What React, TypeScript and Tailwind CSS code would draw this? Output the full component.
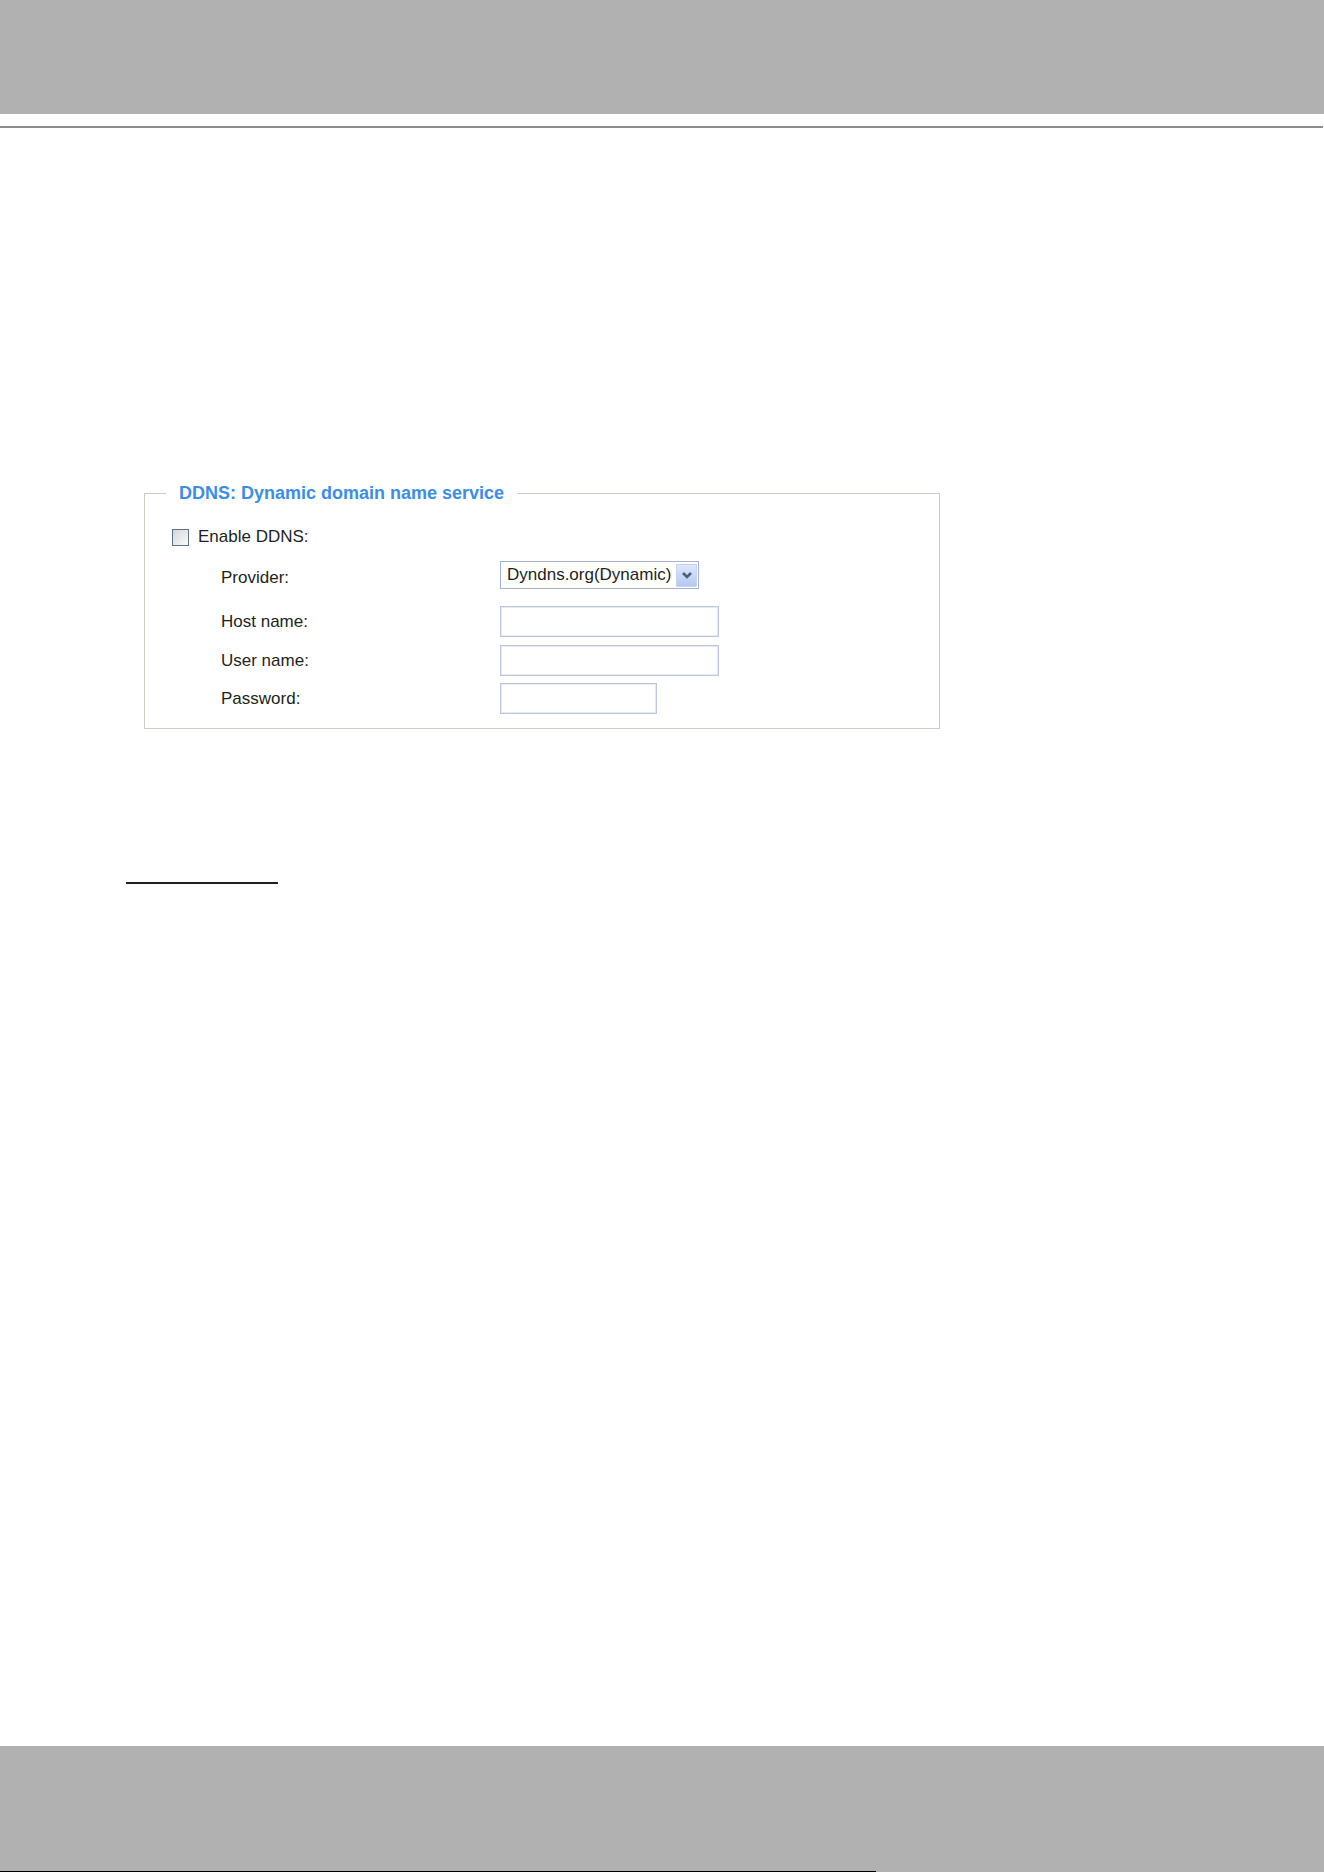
import React from 'react'

// --- Text input ---
function TextBox({ width }: { width: string }) {
  return (
    <input
      type="text"
      className={`h-[31px] ${width} border border-[#bcc6dc] bg-white shadow-[inset_0_0_0_1px_#e6eaf3] outline-none`}
    />
  )
}

// --- Labelled row ---
function Row({ label, height, labelTop, children, className }: {
  label: string
  height: string
  labelTop: string
  children: React.ReactNode
  className?: string
}) {
  return (
    <div className={`flex ${height} ${className ?? ''}`}>
      <span className={`ml-[76px] w-[279px] leading-[20px] ${labelTop}`}>{label}</span>
      {children}
    </div>
  )
}

export default function App() {
  return (
    <div className="flex min-h-[1872px] flex-col bg-white font-['Liberation_Sans',Arial,sans-serif] text-[17px] text-[#231f20]">
      <header className="h-[114px] w-full bg-[#b1b1b1]" />
      <div className="mt-[12px] h-[2px] w-[1323px] bg-[#8c8c8c]" />

      <fieldset className="ml-[144px] mt-[355px] w-[796px] border border-[#cdcbc2]">
        <legend className="ml-[21px] px-[13px] text-[18px] font-bold leading-[20px] text-[#3a8ee6]">
          DDNS: Dynamic domain name service
        </legend>

        <div className="pt-[24px] pb-[14px]">
          <label className="flex h-[20px] items-center pl-[27px]">
            <input
              type="checkbox"
              className="h-[17px] w-[17px] appearance-none border border-[#5d7189] bg-gradient-to-br from-[#d6d6d6] to-[#fbfbfb]"
            />
            <span className="ml-[9px] leading-[20px]">Enable DDNS:</span>
          </label>

          <Row label="Provider:" height="h-[28px]" labelTop="mt-[7px]" className="mt-[14px]">
            <div className="flex h-[28px] w-[199px] items-center border border-[#a3b3d0] bg-white pl-[6px] pr-[1px]">
              <span className="flex-1 leading-[20px]">Dyndns.org(Dynamic)</span>
              <span className="flex h-[23px] w-[21px] items-center justify-center rounded-[1px] border border-[#c3d3f0] bg-gradient-to-b from-[#dde8fc] to-[#b4c8f0]">
                <svg width="12" height="8" viewBox="0 0 12 8">
                  <path d="M2 2 L6 6 L10 2" fill="none" stroke="#4a5d80" strokeWidth="2.6" />
                </svg>
              </span>
            </div>
          </Row>

          <Row label="Host name:" height="h-[31px]" labelTop="mt-[6px]" className="mt-[17px]">
            <TextBox width="w-[219px]" />
          </Row>
          <Row label="User name:" height="h-[31px]" labelTop="mt-[6px]" className="mt-[8px]">
            <TextBox width="w-[219px]" />
          </Row>
          <Row label="Password:" height="h-[31px]" labelTop="mt-[6px]" className="mt-[7px]">
            <TextBox width="w-[157px]" />
          </Row>
        </div>
      </fieldset>

      <div className="ml-[126px] mt-[153px] h-[2px] w-[152px] bg-[#231f20]" />

      <footer className="mt-auto flex h-[126px] w-full flex-col bg-[#b1b1b1]">
        <div className="mt-auto h-[1px] w-[876px] bg-black" />
      </footer>
    </div>
  )
}
